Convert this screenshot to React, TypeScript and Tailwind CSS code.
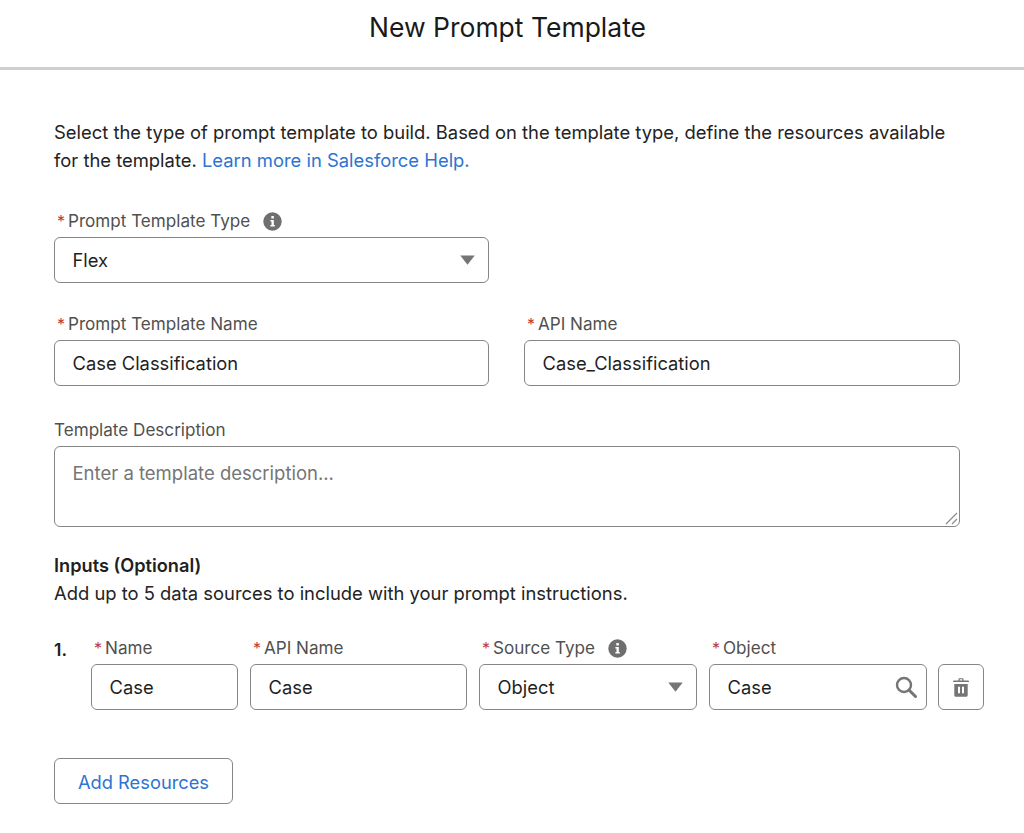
import React from 'react';

const FONT = "font-['Inter','Liberation_Sans',sans-serif]";
const BOX = 'h-[46px] border-[1.5px] border-[#868686] rounded-[6px] bg-white flex items-center text-[18.35px] text-[#1f1f1f]';

const InfoIcon = () => (
  <svg width="19" height="19" viewBox="0 0 19 19">
    <circle cx="9.5" cy="9.5" r="9.2" fill="#6f6f6f" />
    <rect x="8.3" y="4" width="2.6" height="2.5" rx="0.6" fill="#fff" />
    <path d="M7.4 8h3.4v5h1v1.6H7.4V13h1.1V9.5H7.4z" fill="#fff" />
  </svg>
);

const Caret = () => (
  <svg width="15" height="10" viewBox="0 0 15 10">
    <path d="M0.3 0.5h14.4L7.5 9.8z" fill="#757575" />
  </svg>
);

const Label: React.FC<{ text: string; required?: boolean; info?: boolean }> = ({ text, required, info }) => (
  <div className="h-[24px] flex items-center text-[17.1px] text-[#505050] pl-[3px]">
    {required && <span className="text-[#c23934] w-[11px] text-[16px]">*</span>}
    <span>{text}</span>
    {info && <span className="ml-[13px] flex"><InfoIcon /></span>}
  </div>
);

const Field: React.FC<{ value: string; className?: string; children?: React.ReactNode }> = ({ value, className, children }) => (
  <div className={`${BOX} mt-[4px] pl-[17.5px] justify-between ${className || ''}`}>
    <span className="pt-[2px]">{value}</span>
    {children}
  </div>
);

export default function App() {
  return (
    <div className={`${FONT} w-[1024px] h-[833px] bg-white overflow-hidden`}>
      <header className="h-[70px] border-b-[3px] border-[#cfcfcf] flex items-center justify-center">
        <h1 className="text-[26.5px] text-[#1a1a1a] pb-[12px] pr-[9px]">New Prompt Template</h1>
      </header>

      <div className="pl-[54px] pr-[40px] pt-[48px]">
        <p className="text-[18.4px] leading-[28px] text-[#232323]">
          Select the type of prompt template to build. Based on the template type, define the resources available
          <br />
          for the template. <span className="text-[#2e74d1]">Learn more in Salesforce Help.</span>
        </p>

        <div className="mt-[35px] w-[435px]">
          <Label text="Prompt Template Type" required info />
          <Field value="Flex" className="pr-[13px]"><Caret /></Field>
        </div>

        <div className="mt-[29px] flex gap-[35px] w-[906px]">
          <div className="w-[435px]">
            <Label text="Prompt Template Name" required />
            <Field value="Case Classification" />
          </div>
          <div className="w-[436px]">
            <Label text="API Name" required />
            <Field value="Case_Classification" />
          </div>
        </div>

        <div className="mt-[32px] w-[906px]">
          <div className="h-[24px] flex items-center text-[17.1px] text-[#505050]">Template Description</div>
          <div className="relative mt-[4px] h-[81px] border-[1.5px] border-[#868686] rounded-[6px] pl-[17.5px] pt-[13px] text-[18.5px] text-[#757575]">
            Enter a template description...
            <svg className="absolute right-[1px] bottom-[1px]" width="13" height="13" viewBox="0 0 13 13">
              <path d="M1 12L12 1M7 12l5-5" stroke="#8a8a8a" strokeWidth="1.2" fill="none" />
            </svg>
          </div>
        </div>

        <h2 className="mt-[26px] text-[18.2px] leading-[24px] font-semibold text-[#1f1f1f]">Inputs (Optional)</h2>
        <p className="mt-[4px] text-[18.4px] leading-[24px] text-[#232323]">Add up to 5 data sources to include with your prompt instructions.</p>

        <div className="mt-[31px] flex">
          <div className="w-[37px] text-[17.5px] font-semibold text-[#1f1f1f] leading-[24px] pt-[2px]">1.</div>
          <div className="flex gap-[12px] items-end">
            <div className="w-[147px]">
              <Label text="Name" required />
              <Field value="Case" />
            </div>
            <div className="w-[217px]">
              <Label text="API Name" required />
              <Field value="Case" />
            </div>
            <div className="w-[218px]">
              <Label text="Source Type" required info />
              <Field value="Object" className="pr-[13px]"><Caret /></Field>
            </div>
            <div className="w-[218px] mr-[-1px]">
              <Label text="Object" required />
              <Field value="Case" className="pr-[9px]">
                <svg width="22" height="22" viewBox="0 0 22 22" fill="none" stroke="#757575">
                  <circle cx="9" cy="9" r="7" strokeWidth="2.4" />
                  <path d="M14 14l6.500 6.500" strokeWidth="3" strokeLinecap="round" />
                </svg>
              </Field>
            </div>
            <button className={`${BOX} w-[46px] justify-center`}>
              <svg width="16" height="19" viewBox="0 0 16 19" fill="#757575">
                <path d="M5.500 2.500V1.200C5.500.6 6 .2 6.600.2h2.800c.6 0 1.100.4 1.100 1v1.300h4.600c.5 0 .9.4.9.9v.6H0v-.6c0-.5.4-.9.9-.9zm1.200 0h2.600V1.300H6.700z" />
                <path d="M1.300 6h13.400v11.300c0 .9-.7 1.500-1.500 1.500H2.800c-.8 0-1.500-.6-1.500-1.500zm3.700 2.800v6.500h2V8.800zm4 0v6.500h2V8.800z" fillRule="evenodd" />
              </svg>
            </button>
          </div>
        </div>

        <button className="mt-[48px] w-[179px] h-[46px] pt-[3px] border-[1.5px] border-[#868686] rounded-[6px] text-[18.3px] text-[#2e74d1] flex items-center justify-center">
          Add Resources
        </button>
      </div>
    </div>
  );
}
